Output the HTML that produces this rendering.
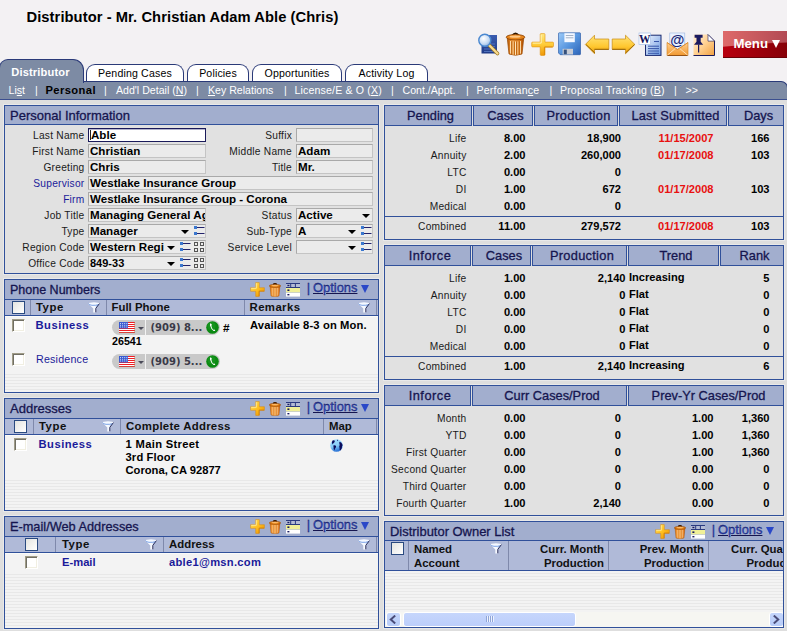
<!DOCTYPE html>
<html>
<head>
<meta charset="utf-8">
<title>Distributor - Mr. Christian Adam Able (Chris)</title>
<style>
html,body{margin:0;padding:0}
body{width:787px;height:631px;overflow:hidden;position:relative;background:#f3f1f3;font-family:"Liberation Sans",Arial,sans-serif;font-size:10.67px;color:#1a1a1a}
.abs{position:absolute}
#ttl{left:26.5px;top:8px;letter-spacing:0.07px;font-size:14.72px;font-weight:bold;color:#000;white-space:nowrap;line-height:18px}
#content{left:0;top:100px;width:787px;height:531px;background:#dedede}
/* tabs */
.tab{position:absolute;top:64px;height:17px;box-sizing:border-box;background:#fff;border:1px solid #2a3a78;border-bottom:none;border-radius:9px 9px 0 0;text-align:center;font-size:10.6px;letter-spacing:0.15px;line-height:17px;color:#000;white-space:nowrap}
#tabA{left:-1px;top:59px;width:85px;height:24px;z-index:2;background:#7d8ba4;border:1px solid #2a3a78;border-bottom:none;border-radius:9px 11px 0 0;color:#fff;font-weight:bold;font-size:11.1px;line-height:25px;text-indent:-2px}
#subnav{left:-1px;top:81px;width:789px;height:19px;box-sizing:border-box;background:#7d8ba4;border-top:1px solid #2a3a78;border-bottom:1px solid #3b4f8f;border-right:1px solid #2a3a78;border-radius:0 7px 0 0}
#subnav span{position:absolute;top:0;line-height:17px;font-size:10.6px;color:#fff;white-space:nowrap}
#subnav u{text-decoration:underline}
/* panels */
.panel{position:absolute;box-sizing:border-box;border:1px solid #30509a;background:#e1e1e1;overflow:hidden;box-shadow:0 0 0 1px #e9e9e9}
.ptitle{position:absolute;left:0;top:0;right:0;height:19px;background:#a2aece;border-bottom:1px solid #30509a;color:#15154f;font-size:12.8px;line-height:19px;white-space:nowrap;-webkit-text-stroke:0.3px #15154f}
.ptitle b{font-weight:normal;position:absolute;left:5px;top:0}
.lbl{position:absolute;text-align:right;font-size:10.2px;letter-spacing:0.25px;line-height:15px;height:14px;color:#1a1a1a;white-space:nowrap}
.lnk{color:#1a1a9a}
.fld{position:absolute;box-sizing:border-box;height:14px;border:1px solid #a9a9a9;border-right-color:#c4c4c4;border-bottom-color:#c4c4c4;background:#ebebeb;font-size:11.6px;font-weight:bold;line-height:12px;color:#000;white-space:nowrap;overflow:hidden;padding-left:1px}
.fld.foc{border:1px solid #1a1a5a;background:#fff;box-shadow:inset 0 0.5px 0 #6a6a9a;padding-left:2px}
.fld.foc:before{content:"";position:absolute;left:0.5px;top:1px;width:1px;height:10px;background:#222}

.sel{padding-right:0}
.arr{position:absolute;width:0;height:0;border-left:4px solid transparent;border-right:4px solid transparent;border-top:4.3px solid #000;top:4.5px}
.ico{position:absolute;top:1px}
.clip{display:inline-block;overflow:hidden;vertical-align:top;height:12px}

.chead{position:absolute;left:0;right:0;height:15px;background:#b0bad8;border-bottom:1px solid #30509a}
.chead span{position:absolute;top:0;line-height:15px;font-weight:bold;font-size:11.4px;color:#111;white-space:nowrap}
.csep{position:absolute;top:0;width:1px;height:15px;background:#7f89ab}
.hcb{position:absolute;top:1px;width:13px;height:13px;box-sizing:border-box;border:1px solid #2a4a80;background:linear-gradient(135deg,#e4e4e0,#fff)}
.lbody{position:absolute;left:0;right:0;bottom:0;background:#f3f3f3;box-shadow:inset 0 1px 0 #fbfbf8}
.stripes{position:absolute;left:0;right:0;background:repeating-linear-gradient(#f3f3f3 0,#f3f3f3 2px,#e8e8e8 2px,#e8e8e8 3px)}
.cb{position:absolute;width:13px;height:13px;box-sizing:border-box;background:#fff;border:1px solid #a09c88;border-right-color:#fff;border-bottom-color:#fff;box-shadow:inset 1px 1px 0 #716f64,inset -1px -1px 0 #f1efe2}
.cell{position:absolute;font-size:11.2px;font-weight:bold;color:#000;white-space:nowrap;line-height:13px}
.cell.bl{color:#1a1a9a}
.opts{position:absolute;top:-1px;line-height:18px;font-size:12.9px;color:#2a48c8;white-space:nowrap}
.tri{position:absolute;width:0;height:0;border-left:4.6px solid transparent;border-right:4.6px solid transparent;border-top:8.6px solid #2a48c8}
.pill{position:absolute;height:15px;background:#c9c9c9}
.ptxt{position:absolute;font-family:"DejaVu Sans Condensed","DejaVu Sans",sans-serif;font-weight:bold;font-size:11.1px;color:#3a3a48;line-height:15px;white-space:nowrap}

.rp{position:absolute;left:384px;width:400px;box-sizing:border-box;border:1px solid #30509a;background:#e1e1e1;overflow:hidden;box-shadow:0 0 0 1px #e9e9e9}
.hc{position:absolute;top:-1px;height:21px;box-sizing:border-box;border:1px solid #30509a;background:#a2aece;color:#15154f;font-size:12.8px;line-height:20px;text-align:center;white-space:nowrap;padding-left:5px;-webkit-text-stroke:0.3px #15154f}
.hgap{position:absolute;top:-1px;height:20px;width:1px;background:#dedede}
.rl{position:absolute;left:0;width:81.5px;text-align:right;font-size:10.2px;letter-spacing:0.25px;color:#1a1a1a;line-height:14px;white-space:nowrap}
.rv{position:absolute;margin-right:-0.5px;text-align:right;font-size:11.1px;font-weight:bold;color:#000;line-height:12px;white-space:nowrap}
.rv.red{color:#e81010}
.hline{position:absolute;left:0;right:0;height:1px;background:#30509a}

.chead2 span{line-height:14px;top:1px}
.sbtn{position:absolute;top:0;width:15px;height:15px;box-sizing:border-box;border:1px solid #fff;border-radius:3px;background:linear-gradient(#c4d5fb,#b8ccf8)}

#menu{left:723px;top:31px;width:64px;height:27px;overflow:hidden;background:linear-gradient(90deg,#b40010,#8a0008)}
#menu b{position:absolute;left:10.5px;top:5px;font-size:13.2px;line-height:16px;color:#fff}
#menu i{position:absolute;left:48.5px;top:9px;width:0;height:0;border-left:4.7px solid transparent;border-right:4.7px solid transparent;border-top:8.5px solid #fff}
</style>
</head>
<body>
<div id="ttl" class="abs">Distributor - Mr. Christian Adam Able (Chris)</div>
<div id="content" class="abs"></div>

<svg width="0" height="0" style="position:absolute">
<defs>
<linearGradient id="gpl" x1="0" y1="0" x2="1" y2="1"><stop offset="0" stop-color="#ffe870"/><stop offset="0.5" stop-color="#ffc020"/><stop offset="1" stop-color="#e88a00"/></linearGradient>
<linearGradient id="gtr" x1="0" y1="0" x2="1" y2="0"><stop offset="0" stop-color="#e87808"/><stop offset="0.5" stop-color="#ffb050"/><stop offset="1" stop-color="#d86000"/></linearGradient>
<linearGradient id="gfn" x1="0" y1="0" x2="1" y2="0"><stop offset="0" stop-color="#ffffff"/><stop offset="0.6" stop-color="#f4f8ff"/><stop offset="0.85" stop-color="#a8c4f0"/><stop offset="1" stop-color="#5a80d0"/></linearGradient>
<linearGradient id="ggl" x1="0" y1="0" x2="0.3" y2="1"><stop offset="0" stop-color="#a8e0ff"/><stop offset="0.6" stop-color="#88ccf8"/><stop offset="1" stop-color="#2f78d8"/></linearGradient><radialGradient id="ggr" cx="0.4" cy="0.35" r="0.7"><stop offset="0" stop-color="#3aa83a"/><stop offset="1" stop-color="#0a6a10"/></radialGradient>
<symbol id="iplus" viewBox="0 0 15 15"><path d="M5.700 0.600h3.600v5.100h5.100v3.600h-5.100v5.100h-3.600v-5.100h-5.100v-3.600h5.100z" fill="url(#gpl)" stroke="#d8860a" stroke-width="0.500"/><path d="M6.300 1.200v5.100h-5.100" fill="none" stroke="#fff2a8" stroke-width="0.800"/><path d="M9.100 14v-4.900h5" fill="none" stroke="#c87400" stroke-width="0.600"/></symbol>
<symbol id="itrash" viewBox="0 0 12 14"><path d="M4.200 1.400q1.800-1.600 3.600 0" fill="none" stroke="#3a1c00" stroke-width="1.300"/><path d="M1.100 3.400L2 13q4 1.500 8 0L10.900 3.400z" fill="url(#gtr)" stroke="#a04c00" stroke-width="0.400"/><path d="M3.300 4.800v8M5.100 5v8.400M6.900 5v8.400M8.700 4.800v8" stroke="#ffe2b4" stroke-width="0.700"/><path d="M4.200 5v8.300M6 5v8.500M7.800 5v8.300" stroke="#c86408" stroke-width="0.500"/><ellipse cx="6" cy="2.900" rx="5.700" ry="1.500" fill="#e88418" stroke="#8a4000" stroke-width="0.600"/><ellipse cx="6" cy="2.600" rx="3.600" ry="0.700" fill="#ffbe6a"/></symbol>
<symbol id="itable" viewBox="0 0 14 14"><rect x="0" y="0" width="14" height="4.6" fill="#b4bcd4"/><path d="M0 0.5h14M0 4.5h14M4.7 0v4.6M9.4 0v4.6" stroke="#2a3a80" stroke-width="1" fill="none"/><rect x="0" y="5" width="14" height="4.4" fill="#f0f098"/><rect x="0" y="9.8" width="14" height="3.8" fill="#fff"/><rect x="1.4" y="1.8" width="2" height="1.4" fill="#1a1a60"/><rect x="1.4" y="6.4" width="2" height="1.6" fill="#1a1a60"/><rect x="1.4" y="11" width="2" height="1.4" fill="#1a1a60"/></symbol>
<symbol id="ifun" viewBox="0 0 12 11"><path d="M0.800 2L5.300 6.600V10.400H7.700V6.600L11.300 2z" fill="url(#gfn)"/><ellipse cx="6" cy="1.800" rx="5.400" ry="1.500" fill="#f4f8ff"/><path d="M0.700 1.600Q1 3 4 3.300Q8 3.600 10.500 2.600" fill="none" stroke="#5a8ce0" stroke-width="0.800"/><path d="M11.400 1.600L7.800 6.400V10.300" fill="none" stroke="#20204c" stroke-width="0.900"/></symbol>
<symbol id="iflag" viewBox="0 0 16 11"><rect width="16" height="11" fill="#fff"/><path d="M0 0.500h16M0 2.500h16M0 4.500h16M0 6.500h16M0 8.500h16M0 10.500h16" stroke="#f01c24" stroke-width="1"/><rect width="9" height="6.500" fill="#3a5cd0"/><path d="M1 1.500h7.500M1 3.300h7.500M1 5h7.500" stroke="#e8eeff" stroke-width="0.800" stroke-dasharray="1 1.100"/><path d="M0 10.800h16M15.700 0v11" stroke="#b08060" stroke-width="0.600" fill="none"/></symbol>
<symbol id="iphone" viewBox="0 0 13 13"><circle cx="6.500" cy="6.500" r="6.300" fill="#0b8a12"/><circle cx="5.500" cy="5" r="4" fill="#1c9a24" opacity="0.600"/><path d="M4.800 2.300Q3.600 2.800 4 4.600Q4.800 8 7.600 10Q8.600 10.400 9.300 9.400L8 8.300L7.300 8.900Q5.700 7.400 5.300 4.600L6 4z" fill="#fff"/></symbol>
<symbol id="iglobe" viewBox="0 0 13 13"><circle cx="6.500" cy="6.500" r="6.300" fill="url(#ggl)"/><path d="M2.300 1.700Q4 0.800 4.900 1.900L4.300 3.600Q3.200 4.100 2.800 5.400L1.900 3.900zM3.300 6.600Q5 5.900 6.100 6.900Q6.100 8.600 5.100 9.600L4.400 11.500Q3.300 10.100 3.600 8.600zM9.400 2.700Q11.500 3 12.200 5L12.700 6.600L12.100 6.800Q12.300 9.600 10.500 11.600Q9.200 11.100 9.600 9.300Q8.700 7.500 9.700 6Q9 4 9.400 2.700zM7 0.500L8.200 1.200L7.500 2.300z" fill="#0c0c5c"/></symbol>
</defs></svg>
<!-- toolbar -->
<svg class="abs" style="left:476px;top:30px" width="244" height="28" viewBox="476 30 244 28">
<defs>
<linearGradient id="tdoc" x1="0" y1="0" x2="0" y2="1"><stop offset="0" stop-color="#3a5cb0"/><stop offset="1" stop-color="#203c88"/></linearGradient>
<radialGradient id="tgl" cx="0.4" cy="0.35" r="0.7"><stop offset="0" stop-color="#ffffff"/><stop offset="0.6" stop-color="#c8dcf4"/><stop offset="1" stop-color="#8ab0e0"/></radialGradient>
<linearGradient id="ttr" x1="0" y1="0" x2="1" y2="0"><stop offset="0" stop-color="#b85a04"/><stop offset="0.35" stop-color="#f8a448"/><stop offset="0.7" stop-color="#e88420"/><stop offset="1" stop-color="#a84c00"/></linearGradient>
<linearGradient id="tpl" x1="0" y1="0" x2="0" y2="1"><stop offset="0" stop-color="#ffe880"/><stop offset="0.5" stop-color="#ffcc38"/><stop offset="1" stop-color="#f09808"/></linearGradient>
<linearGradient id="tfl" x1="0" y1="0" x2="1" y2="1"><stop offset="0" stop-color="#9ccaf8"/><stop offset="0.5" stop-color="#5a98e0"/><stop offset="1" stop-color="#2c64b8"/></linearGradient>
<linearGradient id="tar" x1="0" y1="0" x2="0" y2="1"><stop offset="0" stop-color="#ffe478"/><stop offset="0.6" stop-color="#ffc830"/><stop offset="1" stop-color="#e89808"/></linearGradient>
<linearGradient id="twd" x1="0" y1="0" x2="1" y2="1"><stop offset="0" stop-color="#f0f6ff"/><stop offset="1" stop-color="#6a98e0"/></linearGradient>
<linearGradient id="tenv" x1="0" y1="0" x2="0" y2="1"><stop offset="0" stop-color="#ffd090"/><stop offset="1" stop-color="#f09830"/></linearGradient>
<linearGradient id="tnote" x1="0" y1="0" x2="1" y2="1"><stop offset="0" stop-color="#fff0d8"/><stop offset="0.5" stop-color="#ffd090"/><stop offset="1" stop-color="#f0a040"/></linearGradient>
</defs>
<!-- search -->
<rect x="481.5" y="35" width="15.5" height="18.5" fill="url(#tdoc)"/>
<path d="M484 44h11M484 46.500h11M484 49h11M484 51.500h11" stroke="#5a7cc8" stroke-width="0.800"/>
<path d="M489.500 45.500L497.500 53.500" stroke="#a07820" stroke-width="3.600" stroke-linecap="round"/>
<path d="M489.500 45.500L497.500 53.500" stroke="#f8dc90" stroke-width="2.200" stroke-linecap="round"/>
<circle cx="484.800" cy="40.300" r="6" fill="url(#tgl)" stroke="#4a88d0" stroke-width="1.400"/>
<!-- trash -->
<path d="M512.300 35.600q3.200-4.400 6.400 0" fill="none" stroke="#2e1800" stroke-width="1.900"/>
<path d="M507.300 38.500L509 54q6.500 2.600 13 0L523.700 38.500z" fill="url(#ttr)" stroke="#9a4800" stroke-width="0.700"/>
<path d="M510.600 41v12.600M513.100 41.500v13.200M515.500 41.500v13.400M517.900 41.500v13.200M520.400 41v12.600" stroke="#ffe4b8" stroke-width="1"/>
<path d="M511.800 41.300v13M514.300 41.500v13.300M516.700 41.500v13.300M519.200 41.300v13" stroke="#b45a04" stroke-width="0.900"/>
<ellipse cx="515.500" cy="37.200" rx="9.300" ry="2.700" fill="#e8861c" stroke="#8a4000" stroke-width="0.800"/>
<ellipse cx="515" cy="36.700" rx="5.500" ry="1.100" fill="#ffc884"/>
<!-- plus -->
<path d="M540.200 34.400q0-0.800 0.800-0.800h3.200q0.800 0 0.800 0.800v7.700h7.700q0.800 0 0.800 0.800v3.200q0 0.800-0.800 0.800h-7.700v7.700q0 0.800-0.800 0.800h-3.200q-0.800 0-0.800-0.800v-7.700h-7.700q-0.800 0-0.800-0.800v-3.200q0-0.800 0.800-0.800h7.700z" fill="url(#tpl)" stroke="#e09410" stroke-width="0.600"/>
<path d="M541.200 34.800v8.300h-8.600" fill="none" stroke="#fff6c0" stroke-width="0.900"/>
<path d="M544.400 55v-7.900h8.300" fill="none" stroke="#d88400" stroke-width="0.800"/>
<!-- floppy -->
<path d="M558.500 33.500q0-0.700 0.700-0.700h20.600q0.700 0 0.700 0.700v20.500q0 0.700-0.700 0.700h-19.600l-1.700-1.700z" fill="url(#tfl)" stroke="#2050a0" stroke-width="0.600"/>
<rect x="564.400" y="33.200" width="10.400" height="9" fill="#f4f8ff"/>
<path d="M565.800 35.500h7.600M565.800 37.800h7.600" stroke="#98a8c0" stroke-width="0.900"/>
<rect x="562.600" y="48.800" width="10.400" height="5.700" fill="#c8ccd4"/>
<rect x="563.800" y="49.600" width="3" height="4.600" fill="#34507c"/>
<!-- arrows -->
<path d="M585.300 44.500L594.500 35.200v3.800h14.300v10.200h-14.300v4.600z" fill="url(#tar)" stroke="#c88a10" stroke-width="0.700"/>
<path d="M594.500 49.400h14.300M595 53l-9-8.500" stroke="#9a6808" stroke-width="1"/>
<path d="M634.900 44.500L625.500 35.200v3.800h-13.300v10.200h13.300v4.600z" fill="url(#tar)" stroke="#c88a10" stroke-width="0.700"/>
<path d="M612.200 49.400h13.300M625.500 53l9-8.500" stroke="#9a6808" stroke-width="1"/>
<!-- word -->
<rect x="645.500" y="35.200" width="15.500" height="20.200" fill="url(#twd)" stroke="#1a2a70" stroke-width="1"/>
<path d="M648 46.200h11M648 48.600h11M648 51h11M648 53.300h11M654 41.500h5" stroke="#2a4aa0" stroke-width="0.900"/>
<rect x="639" y="33" width="11.500" height="11.500" fill="#fff" stroke="#a8c0e8" stroke-width="0.700"/>
<text x="644.800" y="43" font-family="Liberation Serif,serif" font-weight="bold" font-size="11.500" fill="#14145a" text-anchor="middle">W</text>
<!-- email -->
<rect x="669.800" y="33" width="15" height="16" fill="#eaf2ff" stroke="#9ab4e0" stroke-width="0.600"/>
<text x="677.300" y="45" font-family="Liberation Sans,sans-serif" font-weight="bold" font-size="14.500" fill="#1a2a78" text-anchor="middle">@</text>
<path d="M667 42.500l10.500 7 10.500-7v13h-21z" fill="url(#tenv)" stroke="#d08020" stroke-width="0.600"/><path d="M667 55.500h21" stroke="#8a4a10" stroke-width="0.900"/><path d="M667 42.500l10.500 7 10.500-7" fill="none" stroke="#e08a28" stroke-width="0.800"/>
<path d="M667.300 55.200l8-6.700M687.700 55.200l-8-6.700" stroke="#ffe4bc" stroke-width="0.900" fill="none"/>
<!-- pin note -->
<path d="M693.500 34.600h14.500l6.500 6.500v14.500h-21z" fill="url(#tnote)"/>
<path d="M708 34.600l6.500 6.500v14.400h-21" fill="none" stroke="#1a1a5a" stroke-width="1"/>
<path d="M708 34.600v6.500h6.500z" fill="#fff" stroke="#1a1a5a" stroke-width="0.600"/>
<path d="M694.600 34.800h8v3h-1.900v4l2.500 2.900h-9.200l2.500-2.900v-4h-1.900z" fill="#1a1a60"/>
<path d="M698.600 44.500v8" stroke="#1a1a60" stroke-width="1.200"/>
</svg>
<div id="menu" class="abs"><svg class="abs" style="left:0;top:0" width="64" height="27"><defs><linearGradient id="mg1" x1="0" y1="0" x2="1" y2="0"><stop offset="0" stop-color="#de6a6a"/><stop offset="1" stop-color="#b24a54"/></linearGradient><linearGradient id="mg2" x1="0" y1="0" x2="1" y2="0"><stop offset="0" stop-color="#b8000f"/><stop offset="1" stop-color="#860008"/></linearGradient></defs><rect width="64" height="27" fill="url(#mg2)"/><path d="M0 0H64V11.500Q30 12.500 0 15.800z" fill="url(#mg1)"/><rect y="26" width="64" height="1" fill="#6a0006"/></svg><b>Menu</b><i></i></div>
<!-- tabs -->
<div id="tabA" class="tab">Distributor</div>
<div class="tab" style="left:86px;width:98px">Pending Cases</div>
<div class="tab" style="left:187px;width:62px">Policies</div>
<div class="tab" style="left:252px;width:90px">Opportunities</div>
<div class="tab" style="left:345px;width:83px">Activity Log</div>
<div id="subnav" class="abs">
<span style="left:9.5px">Li<u>s</u>t</span><span style="left:36px">|</span>
<span style="left:46.5px;color:#000;font-weight:bold;font-size:11.2px;letter-spacing:0.4px">Personal</span><span style="left:105px">|</span>
<span style="left:117px">Add'l Detail (<u>N</u>)</span><span style="left:197px">|</span>
<span style="left:209px"><u>K</u>ey Relations</span><span style="left:285px">|</span>
<span style="left:295.5px;letter-spacing:0.15px">License/E &amp; O (<u>X</u>)</span><span style="left:392px">|</span>
<span style="left:403.5px">Cont./Appt.</span><span style="left:467px">|</span>
<span style="left:477.5px;letter-spacing:0.2px">Performan<u>c</u>e</span><span style="left:550.5px">|</span>
<span style="left:561px;letter-spacing:0.13px">Proposal Tracking (<u>B</u>)</span><span style="left:675px">|</span>
<span style="left:686.5px">&gt;&gt;</span>
</div>

<div class="panel" style="left:4px;top:105px;width:375px;height:169px">
<div class="ptitle" style="height:18px"><b style="font-size:13.0px">Personal Information</b></div>
<div class="lbl" style="left:0;width:79.5px;top:22px">Last Name</div>
<div class="lbl" style="left:0;width:79.5px;top:38px">First Name</div>
<div class="lbl" style="left:0;width:79.5px;top:54px">Greeting</div>
<div class="lbl lnk" style="left:0;width:79.5px;top:70px">Supervisor</div>
<div class="lbl lnk" style="left:0;width:79.5px;top:86px">Firm</div>
<div class="lbl" style="left:0;width:79.5px;top:102px">Job Title</div>
<div class="lbl" style="left:0;width:79.5px;top:118px">Type</div>
<div class="lbl" style="left:0;width:79.5px;top:134px">Region Code</div>
<div class="lbl" style="left:0;width:79.5px;top:150px">Office Code</div>
<div class="fld foc" style="left:83px;top:22px;width:118px">Able</div>
<div class="fld" style="left:83px;top:38px;width:118px">Christian</div>
<div class="fld" style="left:83px;top:54px;width:118px">Chris</div>
<div class="fld" style="left:83px;top:70px;width:285px">Westlake Insurance Group</div>
<div class="fld" style="left:83px;top:86px;width:285px">Westlake Insurance Group - Corona</div>
<div class="fld" style="left:83px;top:102px;width:118px">Managing General Ag</div>
<div class="fld sel" style="left:83px;top:118px;width:118px">Manager<i class="arr" style="left:92px"></i><svg class="ico" style="left:105px" width="11" height="11" viewBox="0 0 11 11"><rect x="0" y="0" width="3" height="3" fill="#3b78cf"/><rect x="0" y="6" width="3" height="3" fill="#3b78cf"/><rect x="3" y="1" width="7.5" height="1" fill="#22226a"/><rect x="3" y="7" width="7.5" height="1" fill="#22226a"/></svg></div>
<div class="fld sel" style="left:83px;top:134px;width:118px"><span class="clip" style="width:74px">Western Region</span><i class="arr" style="left:78px"></i><svg class="ico" style="left:91px" width="11" height="11" viewBox="0 0 11 11"><rect x="0" y="0" width="3" height="3" fill="#3b78cf"/><rect x="0" y="6" width="3" height="3" fill="#3b78cf"/><rect x="3" y="1" width="7.5" height="1" fill="#22226a"/><rect x="3" y="7" width="7.5" height="1" fill="#22226a"/></svg><svg class="ico" style="left:105px" width="11" height="11" viewBox="0 0 11 11" fill="none" stroke="#555" stroke-width="1"><rect x="0.5" y="0.5" width="3" height="3"/><rect x="6.5" y="0.5" width="3" height="3"/><rect x="0.5" y="6.5" width="3" height="3"/><rect x="6.5" y="6.5" width="3" height="3"/></svg></div>
<div class="fld sel" style="left:83px;top:150px;width:118px;font-size:11px">849-33<i class="arr" style="left:78px"></i><svg class="ico" style="left:91px" width="11" height="11" viewBox="0 0 11 11"><rect x="0" y="0" width="3" height="3" fill="#3b78cf"/><rect x="0" y="6" width="3" height="3" fill="#3b78cf"/><rect x="3" y="1" width="7.5" height="1" fill="#22226a"/><rect x="3" y="7" width="7.5" height="1" fill="#22226a"/></svg><svg class="ico" style="left:105px" width="11" height="11" viewBox="0 0 11 11" fill="none" stroke="#555" stroke-width="1"><rect x="0.5" y="0.5" width="3" height="3"/><rect x="6.5" y="0.5" width="3" height="3"/><rect x="0.5" y="6.5" width="3" height="3"/><rect x="6.5" y="6.5" width="3" height="3"/></svg></div>
<div class="lbl" style="left:199px;width:88px;top:22px">Suffix</div>
<div class="lbl" style="left:199px;width:88px;top:38px">Middle Name</div>
<div class="lbl" style="left:199px;width:88px;top:54px">Title</div>
<div class="lbl" style="left:199px;width:88px;top:102px">Status</div>
<div class="lbl" style="left:199px;width:88px;top:118px">Sub-Type</div>
<div class="lbl" style="left:199px;width:88px;top:134px">Service Level</div>
<div class="fld" style="left:291px;top:22px;width:77px"></div>
<div class="fld" style="left:291px;top:38px;width:77px">Adam</div>
<div class="fld" style="left:291px;top:54px;width:77px">Mr.</div>
<div class="fld sel" style="left:291px;top:102px;width:77px">Active<i class="arr" style="left:65px"></i></div>
<div class="fld sel" style="left:291px;top:118px;width:77px">A<i class="arr" style="left:51px"></i><svg class="ico" style="left:64px" width="11" height="11" viewBox="0 0 11 11"><rect x="0" y="0" width="3" height="3" fill="#3b78cf"/><rect x="0" y="6" width="3" height="3" fill="#3b78cf"/><rect x="3" y="1" width="7.5" height="1" fill="#22226a"/><rect x="3" y="7" width="7.5" height="1" fill="#22226a"/></svg></div>
<div class="fld sel" style="left:291px;top:134px;width:77px"><i class="arr" style="left:51px"></i><svg class="ico" style="left:64px" width="11" height="11" viewBox="0 0 11 11"><rect x="0" y="0" width="3" height="3" fill="#3b78cf"/><rect x="0" y="6" width="3" height="3" fill="#3b78cf"/><rect x="3" y="1" width="7.5" height="1" fill="#22226a"/><rect x="3" y="7" width="7.5" height="1" fill="#22226a"/></svg></div>
</div>
<div class="panel" style="left:4px;top:279px;width:375px;height:114px">
<div class="ptitle" style="height:19px"><b style="font-size:12.5px;top:1px">Phone Numbers</b><svg class="abs" style="left:244.5px;top:2px" width="15" height="15"><use href="#iplus"/></svg><svg class="abs" style="left:264.2px;top:2.5px" width="12" height="14"><use href="#itrash"/></svg><svg class="abs" style="left:281.0px;top:3px" width="14" height="14"><use href="#itable"/></svg><span class="opts" style="left:301.8px">|</span><span class="opts" style="left:308.0px"><u>Options</u></span><i class="tri" style="left:355.8px;top:4.5px"></i></div>
<div class="chead" style="top:20px"><i class="hcb" style="left:7px"></i><i class="csep" style="left:25px"></i><span style="left:31px;letter-spacing:0.5px">Type</span><svg class="abs" style="left:83.0px;top:1.5px" width="12" height="11"><use href="#ifun"/></svg><i class="csep" style="left:101px"></i><span style="left:106.5px">Full Phone</span><i class="csep" style="left:239px"></i><span style="left:244.5px;letter-spacing:0.4px">Remarks</span><svg class="abs" style="left:353.0px;top:1.5px" width="12" height="11"><use href="#ifun"/></svg><i class="csep" style="left:371px"></i></div>
<div class="lbody" style="top:36px"><div class="stripes" style="top:56px;bottom:0"></div><i class="cb" style="left:7px;top:3px"></i><span class="cell bl" style="left:30.5px;top:3px;letter-spacing:0.5px">Business</span><span class="cell" style="left:245px;top:3px;letter-spacing:0.13px">Available 8-3 on Mon.</span><div class="pill" style="left:107px;top:4px;width:33px;border-radius:8px 0 0 8px"></div><div class="pill" style="left:141px;top:4px;width:74px;border-radius:0 8px 8px 0"></div><svg class="abs" style="left:114px;top:6px" width="16" height="11"><use href="#iflag"/></svg><i class="abs" style="left:132.700px;top:11px;width:0;height:0;border-left:3px solid transparent;border-right:3px solid transparent;border-top:3.5px solid #4a4a58"></i><svg class="abs" style="left:200.5px;top:5px" width="13" height="13"><use href="#iphone"/></svg><span class="ptxt" style="left:145.5px;top:4px">(909) 8...</span><span class="cell" style="left:218px;top:6px;font-size:11.8px">#</span><span class="cell" style="left:107px;top:19px;font-size:10.7px">26541</span><i class="cb" style="left:7px;top:37px"></i><span class="cell bl" style="left:31px;top:37px;font-weight:normal;font-size:10.7px;letter-spacing:0.2px">Residence</span><div class="pill" style="left:107px;top:38px;width:33px;border-radius:8px 0 0 8px"></div><div class="pill" style="left:141px;top:38px;width:74px;border-radius:0 8px 8px 0"></div><svg class="abs" style="left:114px;top:40px" width="16" height="11"><use href="#iflag"/></svg><i class="abs" style="left:132.700px;top:45px;width:0;height:0;border-left:3px solid transparent;border-right:3px solid transparent;border-top:3.5px solid #4a4a58"></i><svg class="abs" style="left:200.5px;top:39px" width="13" height="13"><use href="#iphone"/></svg><span class="ptxt" style="left:145.5px;top:38px">(909) 5...</span></div></div>
<div class="panel" style="left:4px;top:398px;width:375px;height:113px">
<div class="ptitle" style="height:19px"><b style="font-size:13.0px">Addresses</b><svg class="abs" style="left:244.5px;top:2px" width="15" height="15"><use href="#iplus"/></svg><svg class="abs" style="left:264.2px;top:2.5px" width="12" height="14"><use href="#itrash"/></svg><svg class="abs" style="left:281.0px;top:3px" width="14" height="14"><use href="#itable"/></svg><span class="opts" style="left:301.8px">|</span><span class="opts" style="left:308.0px"><u>Options</u></span><i class="tri" style="left:355.8px;top:4.5px"></i></div>
<div class="chead" style="top:20px"><i class="hcb" style="left:9px"></i><i class="csep" style="left:27.5px"></i><span style="left:34px;letter-spacing:0.5px">Type</span><svg class="abs" style="left:97.0px;top:1.5px" width="12" height="11"><use href="#ifun"/></svg><i class="csep" style="left:115px"></i><span style="left:121px;letter-spacing:0.28px">Complete Address</span><i class="csep" style="left:318px"></i><span style="left:324px">Map</span><i class="csep" style="left:371px"></i></div>
<div class="lbody" style="top:36px"><div class="stripes" style="top:43px;bottom:0"></div><i class="cb" style="left:9px;top:3px"></i><span class="cell bl" style="left:33.5px;top:3px;letter-spacing:0.5px">Business</span><span class="cell" style="left:120.5px;top:3px"><span style="letter-spacing:0.33px">1 Main Street</span><br><span style="letter-spacing:0.15px">3rd Floor</span><br>Corona, CA 92877</span><svg class="abs" style="left:325px;top:4px" width="13" height="13"><use href="#iglobe"/></svg></div></div>
<div class="panel" style="left:4px;top:516px;width:375px;height:113px">
<div class="ptitle" style="height:19px"><b style="font-size:12.75px">E-mail/Web Addresses</b><svg class="abs" style="left:244.5px;top:2px" width="15" height="15"><use href="#iplus"/></svg><svg class="abs" style="left:264.2px;top:2.5px" width="12" height="14"><use href="#itrash"/></svg><svg class="abs" style="left:281.0px;top:3px" width="14" height="14"><use href="#itable"/></svg><span class="opts" style="left:301.8px">|</span><span class="opts" style="left:308.0px"><u>Options</u></span><i class="tri" style="left:355.8px;top:4.5px"></i></div>
<div class="chead" style="top:20px"><i class="hcb" style="left:20px"></i><i class="csep" style="left:50px"></i><span style="left:57px;letter-spacing:0.5px">Type</span><svg class="abs" style="left:140.0px;top:1.5px" width="12" height="11"><use href="#ifun"/></svg><i class="csep" style="left:158px"></i><span style="left:164px">Address</span><svg class="abs" style="left:353.0px;top:1.5px" width="12" height="11"><use href="#ifun"/></svg><i class="csep" style="left:371px"></i></div>
<div class="lbody" style="top:36px"><div class="stripes" style="top:19px;bottom:0"></div><i class="cb" style="left:20px;top:3px"></i><span class="cell bl" style="left:57px;top:3px">E-mail</span><span class="cell bl" style="left:164px;top:3px;letter-spacing:0.27px">able1@msn.com</span></div></div>
<div class="rp" style="top:105px;height:135px">
<div class="hc" style="left:-1px;width:88px">Pending</div><div class="hc" style="left:88px;width:60px">Cases</div><div class="hc" style="left:149px;width:84px;letter-spacing:0.3px">Production</div><div class="hc" style="left:234px;width:108px;letter-spacing:0.2px">Last Submitted</div><div class="hc" style="left:343px;width:56px">Days</div><i class="hgap" style="left:87px"></i><i class="hgap" style="left:148px"></i><i class="hgap" style="left:233px"></i><i class="hgap" style="left:342px"></i>
<span class="rl" style="top:26px">Life</span><span class="rv" style="right:258.0px;top:26px">8.00</span><span class="rv" style="right:162.5px;top:26px">18,900</span><span class="rv red" style="right:70.0px;top:26px">11/15/2007</span><span class="rv" style="right:14.0px;top:26px">166</span>
<span class="rl" style="top:43px">Annuity</span><span class="rv" style="right:258.0px;top:43px">2.00</span><span class="rv" style="right:162.5px;top:43px">260,000</span><span class="rv red" style="right:70.0px;top:43px">01/17/2008</span><span class="rv" style="right:14.0px;top:43px">103</span>
<span class="rl" style="top:60px">LTC</span><span class="rv" style="right:258.0px;top:60px">0.00</span><span class="rv" style="right:162.5px;top:60px">0</span>
<span class="rl" style="top:77px">DI</span><span class="rv" style="right:258.0px;top:77px">1.00</span><span class="rv" style="right:162.5px;top:77px">672</span><span class="rv red" style="right:70.0px;top:77px">01/17/2008</span><span class="rv" style="right:14.0px;top:77px">103</span>
<span class="rl" style="top:94px">Medical</span><span class="rv" style="right:258.0px;top:94px">0.00</span><span class="rv" style="right:162.5px;top:94px">0</span>
<span class="rl" style="top:114px">Combined</span><span class="rv" style="right:258.0px;top:114px">11.00</span><span class="rv" style="right:162.5px;top:114px">279,572</span><span class="rv red" style="right:70.0px;top:114px">01/17/2008</span><span class="rv" style="right:14.0px;top:114px">103</span>
<i class="hline" style="top:110px"></i></div>
<div class="rp" style="top:245px;height:135px">
<div class="hc" style="left:-1px;width:87px;letter-spacing:0.5px">Inforce</div><div class="hc" style="left:87px;width:59px">Cases</div><div class="hc" style="left:147px;width:95px;letter-spacing:0.3px">Production</div><div class="hc" style="left:243px;width:91px">Trend</div><div class="hc" style="left:335px;width:64px">Rank</div><i class="hgap" style="left:86px"></i><i class="hgap" style="left:146px"></i><i class="hgap" style="left:242px"></i><i class="hgap" style="left:334px"></i>
<span class="rl" style="top:26px">Life</span><span class="rv" style="right:258.0px;top:26px">1.00</span><span class="rv" style="right:158.0px;top:26px">2,140</span><span class="rv" style="left:244.0px;top:25px;text-align:left">Increasing</span><span class="rv" style="right:14.0px;top:26px">5</span>
<span class="rl" style="top:43px">Annuity</span><span class="rv" style="right:258.0px;top:43px">0.00</span><span class="rv" style="right:158.0px;top:43px">0</span><span class="rv" style="left:244.0px;top:42px;text-align:left">Flat</span><span class="rv" style="right:14.0px;top:43px">0</span>
<span class="rl" style="top:60px">LTC</span><span class="rv" style="right:258.0px;top:60px">0.00</span><span class="rv" style="right:158.0px;top:60px">0</span><span class="rv" style="left:244.0px;top:59px;text-align:left">Flat</span><span class="rv" style="right:14.0px;top:60px">0</span>
<span class="rl" style="top:77px">DI</span><span class="rv" style="right:258.0px;top:77px">0.00</span><span class="rv" style="right:158.0px;top:77px">0</span><span class="rv" style="left:244.0px;top:76px;text-align:left">Flat</span><span class="rv" style="right:14.0px;top:77px">0</span>
<span class="rl" style="top:94px">Medical</span><span class="rv" style="right:258.0px;top:94px">0.00</span><span class="rv" style="right:158.0px;top:94px">0</span><span class="rv" style="left:244.0px;top:93px;text-align:left">Flat</span><span class="rv" style="right:14.0px;top:94px">0</span>
<span class="rl" style="top:114px">Combined</span><span class="rv" style="right:258.0px;top:114px">1.00</span><span class="rv" style="right:158.0px;top:114px">2,140</span><span class="rv" style="left:244.0px;top:113px;text-align:left">Increasing</span><span class="rv" style="right:14.0px;top:114px">6</span>
<i class="hline" style="top:110px"></i></div>
<div class="rp" style="top:385px;height:131px">
<div class="hc" style="left:-1px;width:87px;letter-spacing:0.5px">Inforce</div><div class="hc" style="left:87px;width:155px">Curr Cases/Prod</div><div class="hc" style="left:243px;width:156px">Prev-Yr Cases/Prod</div><i class="hgap" style="left:86px"></i><i class="hgap" style="left:242px"></i>
<span class="rl" style="top:26px">Month</span><span class="rv" style="right:258.0px;top:26px">0.00</span><span class="rv" style="right:162.5px;top:26px">0</span><span class="rv" style="right:70.0px;top:26px">1.00</span><span class="rv" style="right:14.0px;top:26px">1,360</span>
<span class="rl" style="top:43px">YTD</span><span class="rv" style="right:258.0px;top:43px">0.00</span><span class="rv" style="right:162.5px;top:43px">0</span><span class="rv" style="right:70.0px;top:43px">1.00</span><span class="rv" style="right:14.0px;top:43px">1,360</span>
<span class="rl" style="top:60px">First Quarter</span><span class="rv" style="right:258.0px;top:60px">0.00</span><span class="rv" style="right:162.5px;top:60px">0</span><span class="rv" style="right:70.0px;top:60px">1.00</span><span class="rv" style="right:14.0px;top:60px">1,360</span>
<span class="rl" style="top:77px">Second Quarter</span><span class="rv" style="right:258.0px;top:77px">0.00</span><span class="rv" style="right:162.5px;top:77px">0</span><span class="rv" style="right:70.0px;top:77px">0.00</span><span class="rv" style="right:14.0px;top:77px">0</span>
<span class="rl" style="top:94px">Third Quarter</span><span class="rv" style="right:258.0px;top:94px">0.00</span><span class="rv" style="right:162.5px;top:94px">0</span><span class="rv" style="right:70.0px;top:94px">0.00</span><span class="rv" style="right:14.0px;top:94px">0</span>
<span class="rl" style="top:111px">Fourth Quarter</span><span class="rv" style="right:258.0px;top:111px">1.00</span><span class="rv" style="right:162.5px;top:111px">2,140</span><span class="rv" style="right:70.0px;top:111px">0.00</span><span class="rv" style="right:14.0px;top:111px">0</span>
</div>
<div class="panel" style="left:384px;top:521px;width:400px;height:107px">
<div class="ptitle" style="height:18px"><b style="font-size:12.95px">Distributor Owner List</b><svg class="abs" style="left:269.5px;top:2px" width="15" height="15"><use href="#iplus"/></svg><svg class="abs" style="left:289.2px;top:2.5px" width="12" height="14"><use href="#itrash"/></svg><svg class="abs" style="left:306.0px;top:3px" width="14" height="14"><use href="#itable"/></svg><span class="opts" style="left:326.8px">|</span><span class="opts" style="left:333.0px"><u>Options</u></span><i class="tri" style="left:380.8px;top:4.5px"></i></div>
<div class="chead chead2" style="top:19px;height:29px"><i class="hcb" style="left:6px"></i><i class="csep" style="left:23px;height:29px"></i><span style="left:29px">Named<br>Account</span><svg class="abs" style="left:105.0px;top:1.5px" width="12" height="11"><use href="#ifun"/></svg><i class="csep" style="left:123px;height:29px"></i><span style="right:179px;text-align:right">Curr. Month<br>Production</span><i class="csep" style="left:223px;height:29px"></i><span style="right:79px;text-align:right">Prev. Month<br>Production</span><i class="csep" style="left:323px;height:29px"></i><span style="left:346px;text-align:left">Curr. Quarter<br><span style="position:static;padding-left:15.5px">Production</span></span></div>
<div class="lbody" style="top:49px"><div class="stripes" style="top:0;bottom:15px"></div><div class="abs" style="left:0;right:0;bottom:0;height:15px;background:#f6f6f2"><i class="sbtn" style="left:0.5px"></i><i class="sbtn" style="right:-0.5px"></i><svg class="abs" style="left:3.500px;top:3px" width="8" height="9" viewBox="0 0 8 9"><path d="M6.200 0.600L1.800 4.500l4.400 3.900" fill="none" stroke="#4a4c78" stroke-width="2"/></svg><svg class="abs" style="right:3px;top:3px" width="8" height="9" viewBox="0 0 8 9"><path d="M1.800 0.600L6.200 4.500l-4.400 3.900" fill="none" stroke="#4a4c78" stroke-width="2"/></svg><div class="abs" style="left:18px;top:0;width:173px;height:15px;box-sizing:border-box;border:1px solid #fff;border-radius:3px;background:linear-gradient(#c6d6fc,#bccefa)"></div><div class="abs" style="left:100.5px;top:4px;width:8px;height:6px;background:repeating-linear-gradient(90deg,#8fa5d8 0,#8fa5d8 1px,#eef3ff 1px,#eef3ff 2px)"></div></div></div></div>
<!--PANELS-->
</body>
</html>
